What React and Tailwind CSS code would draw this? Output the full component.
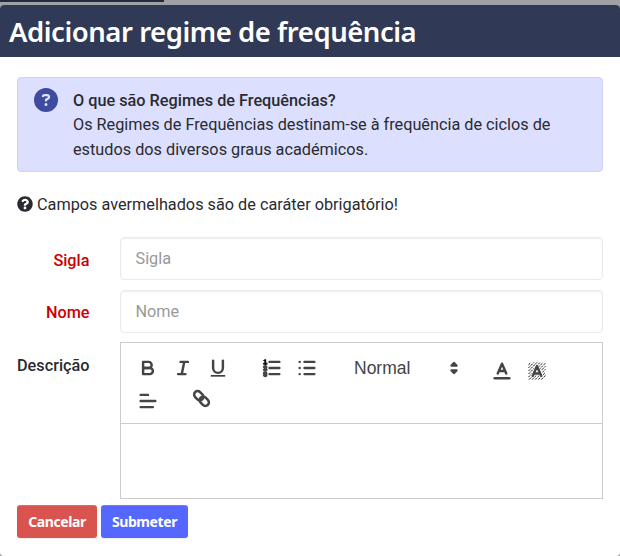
import { FaQuestionCircle } from 'react-icons/fa';
import { FaCircleQuestion } from 'react-icons/fa6';

const Icon = ({ children, className = '' }) => (
  <svg
    viewBox="0 0 18 18"
    className={`block h-[22px] w-[22px] shrink-0 fill-none stroke-[#444] stroke-2 ${className}`}
    strokeLinecap="round"
    strokeLinejoin="round"
  >
    {children}
  </svg>
);

const ToolButton = ({ label, className = '', children }) => (
  <button type="button" aria-label={label} className={`flex h-[30px] shrink-0 items-center ${className}`}>
    {children}
  </button>
);

const Field = ({ label, value, labelClass = 'pt-[11px]' }) => (
  <div className="flex h-[43px]">
    <label className={`w-[72.5px] shrink-0 text-right font-medium leading-6 text-[#cc0000] ${labelClass}`}>{label}</label>
    <input
      type="text"
      placeholder={value}
      className="ml-[30.5px] h-[43px] w-[483px] rounded-[4px] border border-[#ebebeb] bg-white px-[14.5px] shadow-[inset_0_1px_2px_rgba(0,0,0,0.07)] outline-none placeholder:text-[#999]"
    />
  </div>
);

const Toolbar = () => (
  <div className="h-[82px] border border-[#ccc] pt-[10px] pl-[15.5px]">
    <div className="flex h-[30px]">
      <ToolButton label="Bold" className="w-[35px]">
        <Icon>
          <path d="M5,4H9.5A2.5,2.5,0,0,1,9.5,9H5Z" />
          <path d="M5,9h5.5A2.5,2.5,0,0,1,10.5,14H5Z" />
        </Icon>
      </ToolButton>
      <ToolButton label="Italic" className="w-[35px]">
        <Icon>
          <path d="M7,4H13M5,14H11M8,14L10,4" />
        </Icon>
      </ToolButton>
      <ToolButton label="Underline" className="w-[35px]">
        <Icon>
          <path d="M5,3V9a4,4,0,0,0,4,4H9a4,4,0,0,0,4-4V3" />
          <rect x="3" y="15" width="12" height="1" rx="0.5" className="fill-black stroke-none" />
        </Icon>
      </ToolButton>
      <ToolButton label="Ordered list" className="ml-[19px] w-[35px]">
        <Icon>
          <path d="M7,4H15M7,9H15M7,14H15" />
          <path d="M2.5,5.5H4.5" />
          <path d="M4.5,10.5h-2c0-.234,1.85-1.076,1.85-2.234A0.959,0.959,0,0,0,2.5,8.156" />
          <path d="M2.5,14.846a0.959,0.959,0,0,0,1.85-.109A0.7,0.7,0,0,0,3.75,14a0.688,0.688,0,0,0,.6-0.736,0.959,0.959,0,0,0-1.85-.109" />
          <path
            className="fill-black stroke-black stroke-[0.4]"
            d="M3.5,6A0.5,0.5,0,0,1,3,5.5V3.085l-0.276.138A0.5,0.5,0,0,1,2.053,3c-0.124-.247-0.023-0.324.224-0.447l1-.5A0.5,0.5,0,0,1,4,2.5v3A0.5,0.5,0,0,1,3.5,6Z"
          />
        </Icon>
      </ToolButton>
      <ToolButton label="Bullet list" className="w-[35px]">
        <Icon>
          <path d="M7,4H15M7,9H15M7,14H15" />
          <path d="M3,4H3.01M3,9H3.01M3,14H3.01" />
        </Icon>
      </ToolButton>
      <button
        type="button"
        className="ml-[23.5px] flex h-[30px] w-[110.5px] items-center justify-between font-['Liberation_Sans',Arial,sans-serif] text-[17.5px] font-normal text-[#444]"
      >
        Normal
        <Icon>
          <path d="M7,11L9,13L11,11ZM7,7L9,5L11,7Z" className="fill-[#444]" />
        </Icon>
      </button>
      <ToolButton label="Text color" className="ml-[26px] w-[35px] pt-[6px]">
        <Icon>
          <path d="M3,15H15" />
          <path d="M5.5,11L9,3L12.5,11M11.63,9H6.38" />
        </Icon>
      </ToolButton>
      <ToolButton label="Background color" className="w-[35px] pt-[6px]">
        <Icon>
          <path
            className="stroke-[#111] stroke-[0.8]"
            strokeDasharray="2 0.8"
            strokeLinecap="butt"
            d="M2,4L4,2M2,6.5L6.5,2M2,9L9,2M2,11.5L11.5,2M2,14L14,2M2.5,16L16,2.5M5,16L16,5M7.5,16L16,7.5M10,16L16,10M12.5,16L16,12.5"
          />
          <path d="M5.5,13L9,5L12.5,13M11.63,11H6.38" className="stroke-white stroke-[3]" />
          <path d="M5.5,13L9,5L12.5,13M11.63,11H6.38" />
        </Icon>
      </ToolButton>
    </div>
    <div className="flex h-[33px] items-center pt-[3px]">
      <ToolButton label="Align" className="w-[55px]">
        <Icon>
          <path d="M3,4H9M3,9H15M3,14H13" />
        </Icon>
      </ToolButton>
      <ToolButton label="Link" className="w-[35px] pb-[5px]">
        <svg viewBox="0 0 19 19" className="h-[19px] w-[19px] fill-none stroke-[#444] stroke-[2.5]">
          <g transform="translate(9.5 9.5) rotate(45)">
            <rect x="-9" y="-3.5" width="10.2" height="7" rx="3.5" />
            <rect x="-1.2" y="-3.5" width="10.2" height="7" rx="3.5" />
          </g>
        </svg>
      </ToolButton>
    </div>
  </div>
);

export default function App() {
  return (
    <div className="flex h-[556px] w-[620px] flex-col overflow-hidden bg-[#9fa1a4] font-[Roboto,sans-serif] text-[16.25px] text-[#292b30]">
      <div className="flex h-[5px] shrink-0 flex-col">
        <div className="h-[2px] w-[164px] bg-[#232a40]" />
      </div>
      <div className="flex-1 overflow-hidden rounded-[4px] bg-white">
        <header className="flex h-[52px] items-center bg-[#303956] pt-px pl-[9px]">
          <h1 className="whitespace-nowrap font-['Noto_Sans',sans-serif] text-[27.5px] font-semibold leading-none tracking-[-0.46px] text-white">
            Adicionar regime de frequência
          </h1>
        </header>

        <main className="px-[17px] pt-5">
          <div className="flex h-[95px] w-[586px] rounded-[4px] border border-[#cdd1fb] bg-[#dddfff] pt-[10px] pl-4">
            <FaCircleQuestion className="h-6 w-6 shrink-0 text-[#3f4b9f]" />
            <div className="ml-[15px] whitespace-nowrap pt-[0.6px] leading-[24.6px]">
              <p className="font-medium">O que são Regimes de Frequências?</p>
              <p>
                Os Regimes de Frequências destinam-se à frequência de ciclos de
                <br />
                estudos dos diversos graus académicos.
              </p>
            </div>
          </div>

          <p className="mt-5 flex h-[25px] items-center gap-1 leading-[25px]">
            <FaQuestionCircle className="-mt-px h-4 w-4" />
            Campos avermelhados são de caráter obrigatório!
          </p>

          <form className="mt-5 flex flex-col gap-[10px]">
            <Field label="Sigla" value="Sigla" labelClass="pt-3" />
            <Field label="Nome" value="Nome" />
            <div className="-mt-px flex">
              <label className="w-[72.5px] shrink-0 pt-[11.5px] text-right font-medium leading-6">Descrição</label>
              <div className="ml-[30.5px] w-[483px]">
                <Toolbar />
                <div className="h-[75px] border border-t-0 border-[#ccc]" />
              </div>
            </div>
          </form>

          <div className="mt-[6px] flex gap-1 font-['Noto_Sans',sans-serif] text-[14px] font-bold tracking-[-0.4px] text-white">
            <button type="button" className="h-[33px] w-20 rounded-[3px] bg-[#d9534f] shadow-[inset_0_1px_0_rgba(255,255,255,0.15),0_1px_1px_rgba(0,0,0,0.07)]">
              Cancelar
            </button>
            <button type="button" className="h-[33px] w-[87px] rounded-[3px] bg-[#5468ff] shadow-[inset_0_1px_0_rgba(255,255,255,0.15),0_1px_1px_rgba(0,0,0,0.07)]">
              Submeter
            </button>
          </div>
        </main>
      </div>
    </div>
  );
}
